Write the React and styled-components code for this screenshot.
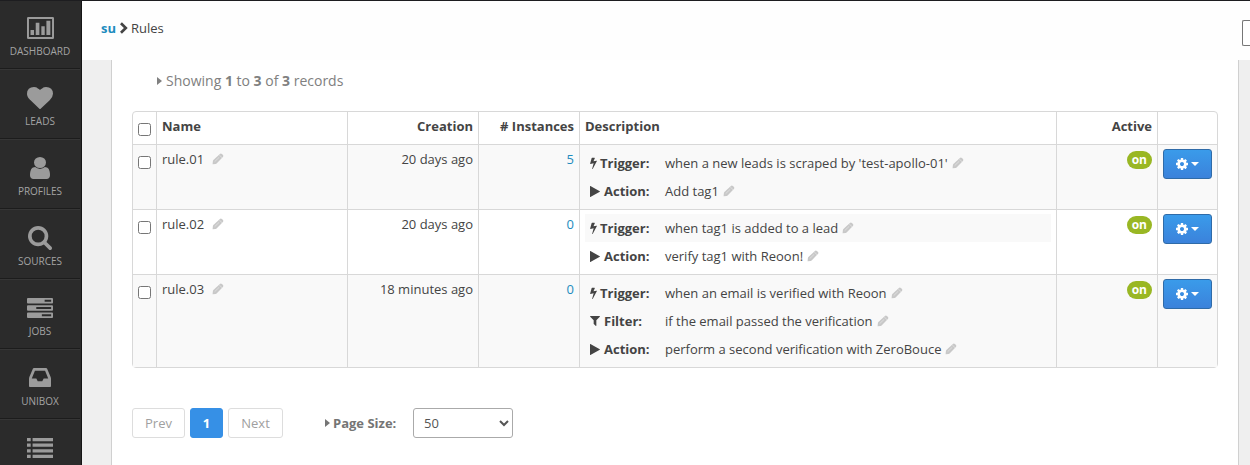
import React from 'react';
import styled, { createGlobalStyle } from 'styled-components';

const GlobalStyle = createGlobalStyle`
  * { box-sizing: border-box; }
  body {
    margin: 0;
    background: #efefef;
    font: 13px/20px "Open Sans", sans-serif;
    color: #444;
    overflow: hidden;
  }
`;

const PATHS = {
  chart: 'M90 128h1740q90 0 90 90v1356q0 90-90 90H90q-90 0-90-90V218q0-90 90-90zM140 268v1256h1640V268zM250 1038h250v350H250zM620 530h260v858H620zM1020 780h240v608h-240zM1380 390h280v998h-280z',
  heart: 'M896 1664q-26 0-44-18l-624-602q-10-8-27.5-26t-55.5-65.5-68-97.5-53.5-121-23.5-138q0-220 127-344t351-124q62 0 126.5 21.5t120 58 95.5 68.5 76 68q36-36 76-68t95.5-68.5 120-58 126.5-21.5q224 0 351 124t127 344q0 221-229 450l-623 600q-18 18-44 18z',
  user: 'M1536 1399q0 109-62.5 187t-150.5 78h-854q-88 0-150.5-78t-62.5-187q0-85 8.5-160.5t31.5-152 58.5-131 94-89 134.5-34.5q131 128 313 128t313-128q76 0 134.5 34.5t94 89 58.5 131 31.5 152 8.5 160.5zm-256-887q0 159-112.5 271.5t-271.5 112.5-271.5-112.5-112.5-271.5 112.5-271.5 271.5-112.5 271.5 112.5 112.5 271.5z',
  search: 'M1216 832q0-185-131.5-316.5t-316.5-131.5-316.5 131.5-131.5 316.5 131.5 316.5 316.5 131.5 316.5-131.5 131.5-316.5zm512 832q0 52-38 90t-90 38q-54 0-90-38l-343-342q-179 124-399 124-143 0-273.5-55.5t-225-150-150-225-55.5-273.5 55.5-273.5 150-225 225-150 273.5-55.5 273.5 55.5 225 150 150 225 55.5 273.5q0 220-124 399l343 343q37 37 37 90z',
  tasks: 'M64 128h1664q64 0 64 64v256q0 64-64 64H64q-64 0-64-64V192q0-64 64-64zM1216 256v128h448V256zM64 640h1664q64 0 64 64v256q0 64-64 64H64q-64 0-64-64V704q0-64 64-64zM640 768v128h1024V768zM64 1152h1664q64 0 64 64v256q0 64-64 64H64q-64 0-64-64v-256q0-64 64-64zM1024 1280v128h640v-128z',
  inbox: 'M1151 960h316q-1-3-2.5-8t-2.5-8l-212-496h-708l-212 496q-1 2-2.5 8t-2.5 8h316l95 192h320zm513 30v482q0 26-19 45t-45 19h-1408q-26 0-45-19t-19-45v-482q0-62 25-123l238-552q10-25 36.5-42t52.5-17h832q26 0 52.5 17t36.5 42l238 552q25 61 25 123z',
  list: 'M0 160h256v224H0zM384 160h1408v224H384zM0 544h256v224H0zM384 544h1408v224H384zM0 928h256v224H0zM384 928h1408v224H384zM0 1312h256v224H0zM384 1312h1408v224H384z',
  cog: 'M1152 896q0-106-75-181t-181-75-181 75-75 181 75 181 181 75 181-75 75-181zm512-109v222q0 12-8 23t-20 13l-185 28q-19 54-39 91 35 50 107 138 10 12 10 25t-9 23q-27 37-99 108t-94 71q-12 0-26-9l-138-108q-44 23-91 38-16 136-29 186-7 28-36 28h-222q-14 0-24.5-8.5t-11.5-21.5l-28-184q-49-16-90-37l-141 107q-10 9-25 9-14 0-25-11-126-114-165-168-7-10-7-23 0-12 8-23 15-21 51-66.5t54-70.5q-27-50-41-99l-183-27q-13-2-21-12.5t-8-23.5v-222q0-12 8-23t19-13l186-28q14-46 39-92-40-57-107-138-10-12-10-24 0-10 9-23 26-36 98.5-107.5t94.5-71.5q13 0 26 10l138 107q44-23 91-38 16-136 29-186 7-28 36-28h222q14 0 24.5 8.5t11.5 21.5l28 184q49 16 90 37l142-107q9-9 24-9 13 0 25 10 129 119 165 170 7 8 7 22 0 12-8 23-15 21-51 66.5t-54 70.5q26 50 41 98l183 28q13 2 21 12.5t8 23.5z',
  Filter: 'M1595 295q17 41-14 70l-493 493v742q0 42-39 59-13 5-25 5-27 0-45-19l-256-256q-19-19-19-45v-486l-493-493q-31-29-14-70 17-39 59-39h1280q42 0 59 39z',
  Trigger: 'M1333 566q18 20 7 44l-540 1157q-13 25-42 25-4 0-14-2-17-5-25.5-19t-4.5-30l197-808-406 101q-4 1-12 1-18 0-31-11-18-15-13-39l201-825q4-14 16-23t28-9h328q19 0 32 12.5t13 29.5q0 8-5 18l-171 463 396-98q8-2 12-2 19 0 34 15z',
  Action: 'M1576 927l-1328 738q-23 13-39.5 3t-16.5-36v-1472q0-26 16.5-36t39.5 3l1328 738q23 13 23 31t-23 31z',
  chevron: 'M640 100L1440 896 640 1692 380 1432 916 896 380 360z',
};

const Svg = styled.svg`
  display: block;
  flex: none;
  fill: currentColor;
  fill-rule: evenodd;
`;

const Icon = ({ name, width, height, box = '0 0 1792 1792' }) => (
  <Svg width={width} height={height} viewBox={box} preserveAspectRatio="none">
    <path d={PATHS[name]} />
  </Svg>
);

const Shell = styled.div`
  display: flex;
  height: 465px;
  overflow: hidden;
  border-top: 1px solid #1d1d20;
`;

const Sidebar = styled.nav`
  flex: 0 0 82px;
  background: #2b2b2b;
  border-right: 1px solid #151515;
  overflow: hidden;
`;

const NavItem = styled.a`
  display: flex;
  flex-direction: column;
  align-items: center;
  width: 80px;
  height: 70px;
  border-bottom: 1px solid #363636;
  box-shadow: inset 0 -1px 0 #1c1c1c;
  color: #9b9b9b;
  &:first-child { height: 69px; }
  &:first-child > span:first-child { height: 41px; }
`;

const NavIcon = styled.span`
  display: flex;
  align-items: center;
  height: 42px;
  padding-top: 13px;
`;

const NavLabel = styled.span`
  font-size: 10px;
  line-height: 18px;
  color: #a3a3a3;
`;

const Main = styled.main`
  flex: 1;
  min-width: 0;
  display: flex;
  flex-direction: column;
`;

const TopBar = styled.header`
  flex: 0 0 59px;
  display: flex;
  align-items: flex-start;
  background: #fefefe;
  padding: 17px 0 0 19px;
`;

const Crumb = styled.span`
  display: flex;
  align-items: center;
  gap: 3px;
  flex: 1;
  b { color: #1e8cbe; }
`;

const CutField = styled.span`
  width: 8px;
  height: 26px;
  margin-top: 2px;
  border: 1px solid #767676;
  border-right: 0;
  border-radius: 2px 0 0 2px;
  background: #fff;
`;

const Panel = styled.section`
  flex: 1;
  margin: 0 11px 0 29px;
  padding: 0 20px;
  background: #fff;
  border: solid #d0d0d0;
  border-width: 0 1px;
`;

const Summary = styled.div`
  display: flex;
  align-items: center;
  gap: 4px;
  height: 51px;
  padding: 0 0 9px 25px;
  font-size: 14px;
  color: #808080;
`;

const RightCaret = styled.i`
  border: solid transparent;
  border-width: 4px 0 4px 5px;
  border-left-color: currentColor;
`;

const Table = styled.table`
  width: 1086px;
  table-layout: fixed;
  border: 1px solid #d8d8d8;
  border-radius: 4px;
  border-collapse: separate;
  border-spacing: 0;
`;

const Cell = styled.td`
  padding: 4px 5px;
  vertical-align: top;
  text-align: ${(p) => (p.$right ? 'right' : 'left')};
  border-left: 1px solid #d8d8d8;
  &:first-child { border-left: 0; }
`;

const HeadCell = styled(Cell).attrs({ as: 'th' })`
  height: 32px;
`;

const Row = styled.tr`
  background: ${(p) => (p.$striped ? '#f9f9f9' : '#fff')};
  height: ${(p) => p.$height}px;
  > td { border-top: 1px solid #d8d8d8; }
`;

const Check = styled.input.attrs({ type: 'checkbox' })`
  display: block;
  width: 13px;
  height: 13px;
  margin: 7px 0 0;
`;

const Name = styled.span`
  display: flex;
  align-items: center;
  gap: 8px;
`;

const Count = styled.a`
  color: #1e8cbe;
`;

const Step = styled.div`
  display: flex;
  align-items: center;
  height: 28px;
  padding: 0 5px;
  background: ${(p) => (p.$first ? '#f9f9f9' : 'transparent')};
`;

const StepKind = styled.b`
  display: flex;
  align-items: center;
  gap: ${(p) => (p.$wide ? 4 : 3)}px;
  width: 75px;
`;

const StepText = styled.span`
  display: flex;
  align-items: center;
  gap: 4px;
  white-space: nowrap;
`;

const Badge = styled.span`
  display: inline-block;
  height: 18px;
  padding: 0 5px;
  margin-top: 2px;
  border-radius: 9px;
  background: #99b724;
  color: #fff;
  font-size: 12px;
  font-weight: 700;
  line-height: 17px;
`;

const GearButton = styled.button`
  display: flex;
  align-items: center;
  justify-content: center;
  gap: 3px;
  width: 49px;
  height: 30px;
  padding: 0;
  border: 1px solid #2f6ba8;
  border-radius: 3px;
  background: linear-gradient(#3a9bea, #3b82db);
  color: #fff;
`;

const DownCaret = styled.i`
  border: solid transparent;
  border-width: 4px 4px 0;
  border-top-color: currentColor;
`;

const Footer = styled.div`
  display: flex;
  align-items: center;
  margin-top: 40px;
`;

const PageButton = styled.button`
  width: ${(p) => p.$width}px;
  height: 30px;
  margin-right: 5px;
  padding: 0;
  border: 1px solid ${(p) => (p.$current ? '#3690e6' : '#ddd')};
  border-radius: 3px;
  background: ${(p) => (p.$current ? '#3690e6' : '#fff')};
  color: ${(p) => (p.$current ? '#fff' : '#a0a0a0')};
  font: ${(p) => (p.$current ? 700 : 400)} 13px "Open Sans", sans-serif;
`;

const SizeLabel = styled.b`
  display: flex;
  align-items: center;
  gap: 3px;
  width: 88px;
  height: 20px;
  margin: 0 0 1px 37px;
  color: #757575;
`;

const SizeSelect = styled.select`
  width: 100px;
  height: 30px;
  padding: 4px 6px;
  border: 1px solid #aaa;
  border-radius: 3px;
  background: #fff;
  color: #555;
  font: 13px "Open Sans", sans-serif;
`;

const Pencil = () => (
  <Svg width="12" height="12" viewBox="0 0 12 12">
    <path
      fill="#c8c8c8"
      d="M.6 11.3L.9 8q.1-.5.5-.9L7.9.9q1-.8 2 .1l1.1 1.1q.8 1-.1 2L4.600 10.400q-.4.4-.9.5z"
    />
    <path d="M7.200 1.900L10 4.700M2.700 8.600L7.200 4.300" stroke="#e6e6e6" strokeWidth=".7" />
  </Svg>
);

const NAV = [
  { label: 'DASHBOARD', icon: 'chart', width: 27, height: 22, box: '0 128 1920 1536' },
  { label: 'LEADS', icon: 'heart', width: 26, height: 22, box: '0 128 1792 1536' },
  { label: 'PROFILES', icon: 'user', width: 20, height: 22, box: '256 128 1280 1536' },
  { label: 'SOURCES', icon: 'search', width: 24, height: 24, box: '64 128 1664 1664' },
  { label: 'JOBS', icon: 'tasks', width: 26, height: 20, box: '0 128 1792 1408' },
  { label: 'UNIBOX', icon: 'inbox', width: 22, height: 19, box: '128 256 1536 1280' },
  { icon: 'list', width: 26, height: 20, box: '0 160 1792 1376' },
];

const RULES = [
  {
    name: 'rule.01', created: '20 days ago', count: 5, height: 65,
    steps: [['Trigger', "when a new leads is scraped by 'test-apollo-01'"], ['Action', 'Add tag1']],
  },
  {
    name: 'rule.02', created: '20 days ago', count: 0, height: 65,
    steps: [['Trigger', 'when tag1 is added to a lead'], ['Action', 'verify tag1 with Reoon!']],
  },
  {
    name: 'rule.03', created: '18 minutes ago', count: 0, height: 93,
    steps: [
      ['Trigger', 'when an email is verified with Reoon'],
      ['Filter', 'if the email passed the verification'],
      ['Action', 'perform a second verification with ZeroBouce'],
    ],
  },
];

const STEP_ICONS = {
  Trigger: { width: 7, height: 12, box: '430 0 920 1792' },
  Filter: { width: 10, height: 10, box: '180 256 1430 1408' },
  Action: { width: 10, height: 11, box: '192 110 1410 1570' },
};

const COLUMNS = [23, 191, 131, 101, 477, 101, 60];

export default function App() {
  return (
    <Shell>
      <GlobalStyle />
      <Sidebar>
        {NAV.map(({ label, icon, ...size }) => (
          <NavItem key={icon}>
            <NavIcon><Icon name={icon} {...size} /></NavIcon>
            {label && <NavLabel>{label}</NavLabel>}
          </NavItem>
        ))}
      </Sidebar>
      <Main>
        <TopBar>
          <Crumb>
            <b>su</b>
            <Icon name="chevron" width={9} height={12} box="240 50 1240 1692" />
            Rules
          </Crumb>
          <CutField />
        </TopBar>
        <Panel>
          <Summary>
            <RightCaret />
            <span>Showing <b>1</b> to <b>3</b> of <b>3</b> records</span>
          </Summary>
          <Table>
            <colgroup>
              {COLUMNS.map((w, i) => <col key={i} width={w} />)}
            </colgroup>
            <thead>
              <tr>
                <HeadCell><Check /></HeadCell>
                <HeadCell>Name</HeadCell>
                <HeadCell $right>Creation</HeadCell>
                <HeadCell $right># Instances</HeadCell>
                <HeadCell>Description</HeadCell>
                <HeadCell $right>Active</HeadCell>
                <HeadCell />
              </tr>
            </thead>
            <tbody>
              {RULES.map((rule, i) => (
                <Row key={rule.name} $striped={i % 2 === 0} $height={rule.height}>
                  <Cell><Check /></Cell>
                  <Cell><Name>{rule.name}<Pencil /></Name></Cell>
                  <Cell $right>{rule.created}</Cell>
                  <Cell $right><Count>{rule.count}</Count></Cell>
                  <Cell>
                    {rule.steps.map(([kind, text], n) => (
                      <Step key={kind} $first={n === 0}>
                        <StepKind $wide={kind !== 'Trigger'}>
                          <Icon name={kind} {...STEP_ICONS[kind]} />{kind}:
                        </StepKind>
                        <StepText>{text}<Pencil /></StepText>
                      </Step>
                    ))}
                  </Cell>
                  <Cell $right><Badge>on</Badge></Cell>
                  <Cell>
                    <GearButton>
                      <Icon name="cog" width={12} height={12} box="128 128 1536 1536" />
                      <DownCaret />
                    </GearButton>
                  </Cell>
                </Row>
              ))}
            </tbody>
          </Table>
          <Footer>
            <PageButton $width={53}>Prev</PageButton>
            <PageButton $width={33} $current>1</PageButton>
            <PageButton $width={55}>Next</PageButton>
            <SizeLabel><RightCaret />Page Size:</SizeLabel>
            <SizeSelect defaultValue="50"><option>50</option></SizeSelect>
          </Footer>
        </Panel>
      </Main>
    </Shell>
  );
}
